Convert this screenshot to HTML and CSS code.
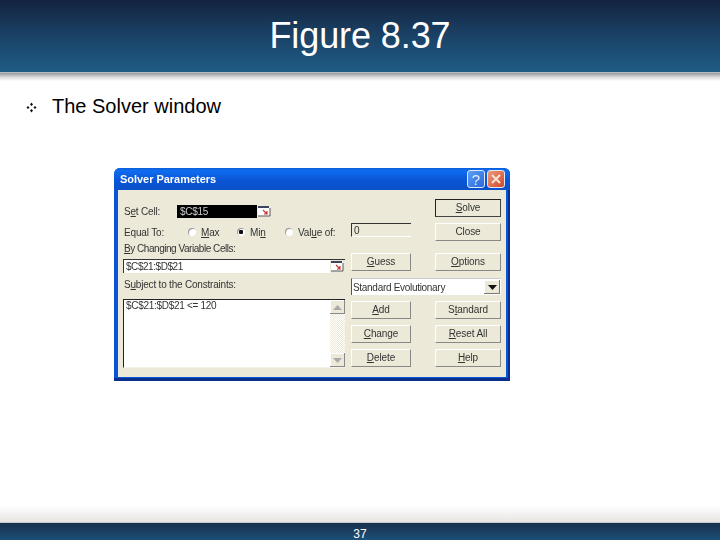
FILE: index.html
```html
<!DOCTYPE html>
<html lang="en">
<head>
<meta charset="utf-8">
<title>Figure 8.37</title>
<link rel="stylesheet" href="styles.css">
</head>
<body>
<div class="slide">
  <header class="head"><h1>Figure 8.37</h1></header>
  <div class="head-shadow"></div>
  <main class="content">
    <div class="bullet-row">
      <svg class="bullet" width="11" height="11" viewBox="0 0 11 11"><path d="M5.5 0.5 7 2.5 5.5 4 4 2.5ZM5.5 7 7 8.5 5.5 10.5 4 8.5ZM2 4 3.5 5.5 2 7 0.5 5.5ZM9 4 10.5 5.5 9 7 7.5 5.5Z" fill="#111"/></svg>
      <span>The Solver window</span>
    </div>
    <section class="dialog">
      <div class="titlebar">
        <span class="title-text">Solver Parameters</span>
        <span class="win-btn help">?</span>
        <span class="win-btn close"><svg width="12" height="12" viewBox="0 0 12 12"><path d="M2 2 10 10M10 2 2 10" stroke="#f6e4dc" stroke-width="2"/></svg></span>
      </div>
      <div class="body">
        <div class="left">
          <div class="row-set">
            <span class="lbl-set">S<u>e</u>t Cell:</span>
            <div class="setcell"><span>$C$15</span></div>
            <span class="ref"><svg width="15" height="13" viewBox="0 0 15 13"><rect x="1" y="2" width="12" height="9" fill="#fff"/><rect x="1" y="1" width="11" height="2" fill="#3a4660"/><path d="M13 3V11H1" stroke="#555" fill="none"/><path d="M6 5 10 9M10 6V9H7" stroke="#c33" stroke-width="1.200" fill="none"/></svg></span>
          </div>
          <div class="row-equal">
            <span class="lbl-eq">Equal To:</span>
            <span class="radio r-max"></span><span class="opt o-max"><u>M</u>ax</span>
            <span class="radio r-min on"></span><span class="opt o-min">Mi<u>n</u></span>
            <span class="radio r-val"></span><span class="opt">Val<u>u</u>e of:</span>
          </div>
          <div class="lbl-block lbl-by"><u>B</u>y Changing Variable Cells:</div>
          <div class="changing">
            <span class="changing-text">$C$21:$D$21</span>
            <span class="ref"><svg width="15" height="13" viewBox="0 0 15 13"><rect x="1" y="2" width="12" height="9" fill="#fff"/><rect x="1" y="1" width="11" height="2" fill="#3a4660"/><path d="M13 3V11H1" stroke="#555" fill="none"/><path d="M6 5 10 9M10 6V9H7" stroke="#c33" stroke-width="1.200" fill="none"/></svg></span>
          </div>
          <div class="lbl-block lbl-sub">S<u>u</u>bject to the Constraints:</div>
          <div class="list">
            <div class="list-text">$C$21:$D$21 &lt;= 120</div>
            <div class="scroll">
              <span class="arrow"><svg width="9" height="5" viewBox="0 0 9 5"><path d="M4.500 0 9 5H0Z" fill="#aaa"/></svg></span>
              <span class="track"></span>
              <span class="arrow"><svg width="9" height="5" viewBox="0 0 9 5"><path d="M0 0H9L4.500 5Z" fill="#aaa"/></svg></span>
            </div>
          </div>
        </div>
        <div class="right">
          <span></span><button class="btn default"><u>S</u>olve</button>
          <div class="valuebox">0</div><button class="btn">Close</button>
          <button class="btn"><u>G</u>uess</button><button class="btn"><u>O</u>ptions</button>
          <div class="combo"><span class="combo-text">Standard Evolutionary</span><span class="combo-btn"><svg width="9" height="5" viewBox="0 0 9 5"><path d="M0 0H9L4.500 5Z" fill="#111"/></svg></span></div>
          <button class="btn"><u>A</u>dd</button><button class="btn">S<u>t</u>andard</button>
          <button class="btn"><u>C</u>hange</button><button class="btn"><u>R</u>eset All</button>
          <button class="btn"><u>D</u>elete</button><button class="btn"><u>H</u>elp</button>
        </div>
      </div>
    </section>
  </main>
  <div class="foot-fade"></div>
  <footer class="foot">37</footer>
</div>
</body>
</html>
```
FILE: styles.css
```css
* { box-sizing: border-box; }
html, body { margin: 0; padding: 0; }
body { width: 720px; height: 540px; overflow: hidden; background: #fff; font-family: "Liberation Sans", Arial, sans-serif; }
.slide { width: 720px; height: 540px; display: flex; flex-direction: column; }
.head { height: 72px; flex: none; background: linear-gradient(#13233f 0%, #1a3f63 45%, #1e5c86 100%); display: flex; justify-content: center; }
.head h1 { margin: 0; padding-top: 15px; color: #fff; font-size: 36px; font-weight: 400; line-height: 42px; letter-spacing: -0.1px; }
.head-shadow { height: 9px; flex: none; background: linear-gradient(#c4c9cf 0, #9b9ea2 18%, #d8d8d8 55%, #fff 100%); }
.content { flex: 1; min-height: 0; display: flex; flex-direction: column; }
.bullet-row { display: flex; align-items: center; height: 24px; margin-top: 13px; padding-left: 26px; font-size: 20px; color: #000; }
.bullet { margin-right: 15px; margin-top: 2px; }
.dialog { margin: 50px 0 0 114px; width: 396px; height: 213px; border-radius: 6px 6px 0 0; background: #0a55d6; padding: 0 4px 4px; display: flex; flex-direction: column; font-size: 10px; color: #333; box-shadow: inset -2px -3px 0 #0a2f8c; filter: blur(0.4px); }
.titlebar { height: 22px; flex: none; display: flex; align-items: center; margin: 0 -4px; padding: 0 5px 0 6px; border-radius: 6px 6px 0 0; background: linear-gradient(#0b5fd8 0%, #0f6df0 12%, #0a55d6 55%, #0a50c8 100%); }
.title-text { flex: 1; color: #fff; font-weight: 700; font-size: 11px; letter-spacing: -0.03px; }
.win-btn { width: 18px; height: 18px; border: 1px solid #dfe8fb; border-radius: 3px; display: flex; align-items: center; justify-content: center; color: #e8f0ff; font-size: 15px; font-weight: 400; margin-left: 2px; }
.help { background: linear-gradient(135deg, #5aa0f4, #2a68dc); }
.close { background: linear-gradient(135deg, #ee9a78, #cf4a2a); }
.body { flex: 1; background: #ece9d8; display: flex; padding: 9px 0 0 5px; min-height: 0; }
.left { width: 222px; flex: none; display: flex; flex-direction: column; }
.row-set { display: flex; align-items: center; height: 13px; margin-top: 6px; }
.lbl-set { width: 54px; padding-left: 1px; letter-spacing: -0.2px; }
.setcell { width: 80px; height: 13px; background: #000; color: #ccc; padding-left: 3px; line-height: 13px; letter-spacing: -0.3px; }
.ref { width: 15px; height: 13px; flex: none; display: flex; background: #ece9d8; }
.row-equal { display: flex; align-items: center; height: 14px; margin-top: 7px; padding-left: 1px; letter-spacing: -0.15px; }
.lbl-eq { width: 64px; }
.radio { width: 8px; height: 8px; flex: none; border-radius: 50%; background: #fff; box-shadow: inset 1px 1px 0 #999; margin-right: 5px; }
.radio.on { background: radial-gradient(circle, #111 0 2px, #fff 2.500px); }
.opt { white-space: nowrap; }
.o-max { width: 36px; }
.o-min { width: 35px; }
.lbl-block { height: 14px; line-height: 14px; padding-left: 1px; white-space: nowrap; }
.lbl-by { margin-top: 3px; letter-spacing: -0.46px; }
.lbl-sub { margin-top: 5px; letter-spacing: -0.2px; }
.changing { display: flex; height: 14px; margin-top: 3px; background: #fff; border-top: 1px solid #333; border-left: 1px solid #333; align-items: center; }
.changing .ref { margin-left: auto; height: 13px; }
.changing-text { padding-left: 2px; letter-spacing: -0.45px; }
.list { display: flex; height: 69px; margin-top: 7px; background: #fff; border-top: 1px solid #222; border-left: 1px solid #222; border-bottom: 1px solid #f4f2e8; }
.list-text { flex: 1; padding: 0 0 0 2px; line-height: 11px; letter-spacing: -0.3px; }
.scroll { width: 15px; display: flex; flex-direction: column; background: #f2f0e4; }
.arrow { height: 14px; flex: none; display: flex; align-items: center; justify-content: center; background: #ece9d8; box-shadow: inset -1px -1px 0 #888, inset 1px 1px 0 #fff; }
.track { flex: 1; background: repeating-conic-gradient(#ece9d8 0 25%, #fff 0 50%) 0 0 / 2px 2px; }
.right { margin-left: 6px; display: grid; grid-template-columns: 60px 66px; column-gap: 24px; grid-template-rows: 24px 30px 25px 23px 24px 24px 18px; align-content: start; }
.btn { height: 18px; padding: 0 0 1px; font: inherit; color: #333; background: #ece9d8; border: 1px solid #ece9d8; border-right-color: #888; border-bottom-color: #888; border-top-color: #fff; border-left-color: #fff; letter-spacing: -0.1px; }
.default { border-color: #222; border-right-color: #444; border-bottom-color: #444; }
.valuebox { height: 14px; border-top: 1px solid #333; border-left: 1px solid #333; border-bottom: 1px solid #fff; padding-left: 2px; line-height: 13px; }
.combo { grid-column: 1 / span 2; height: 17px; background: #fff; border-top: 1px solid #ccc; border-left: 1px solid #555; display: flex; align-items: center; justify-content: space-between; padding-left: 1px; }
.combo-text { letter-spacing: -0.3px; }
.combo-btn { width: 16px; height: 14px; margin-right: 1px; display: flex; align-items: center; justify-content: center; background: #ece9d8; box-shadow: inset -1px -1px 0 #777, inset 1px 1px 0 #fff; }
.foot-fade { height: 16px; flex: none; background: linear-gradient(#fff, #e8e4e0); }
.foot { height: 18px; flex: none; border-top: 1px solid #c6ccd6; background: linear-gradient(#18304c, #1d4f76); color: #fff; font-size: 12px; line-height: 22px; text-align: center; }
```
